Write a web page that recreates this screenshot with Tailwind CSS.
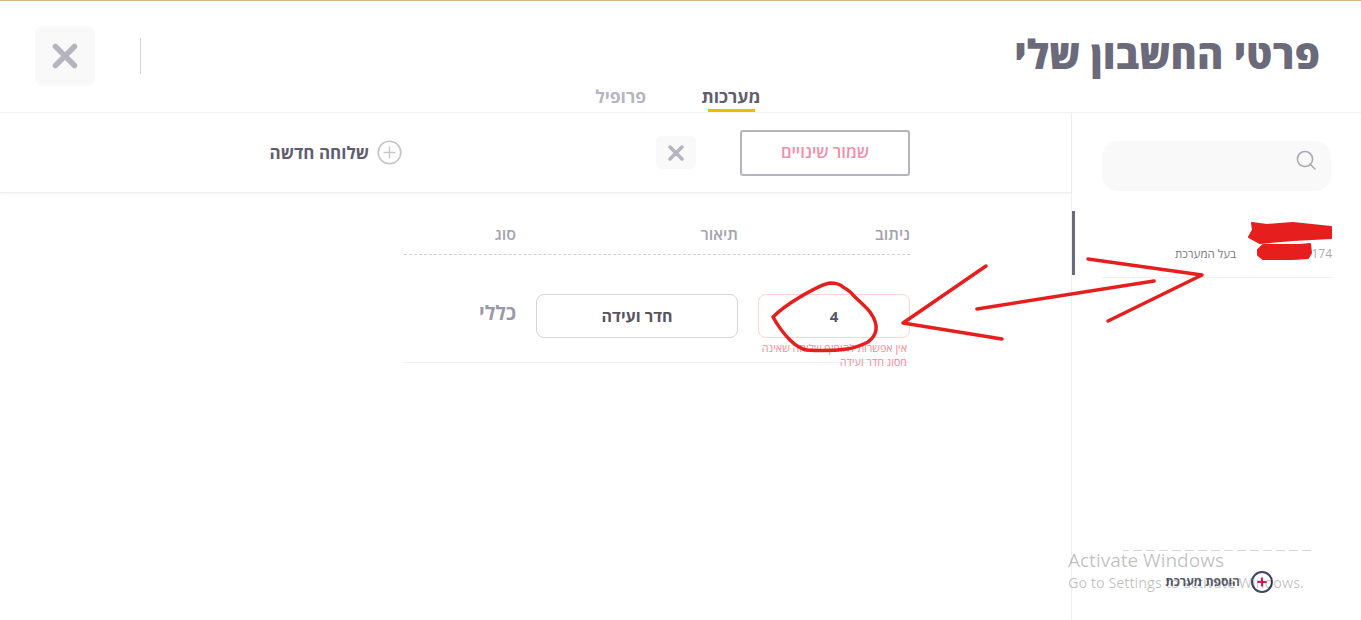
<!DOCTYPE html>
<html lang="he" dir="rtl">
<head>
<meta charset="utf-8">
<script src="https://cdn.jsdelivr.net/npm/@tailwindcss/browser@4"></script>
</head>
<body class="bg-white">
<div class="relative w-[1361px] h-[620px] overflow-hidden bg-white font-['Open_Sans','Liberation_Sans',sans-serif] border-t border-[#d2b48c]">
  <header class="h-[112px] border-b border-[#f3f3f5] flex flex-col">
    <div class="h-[85px] flex justify-between pr-[41px] pl-[35px]">
      <h1 class="mt-[28px] text-[40px] leading-[50px] font-extrabold text-[#6b6a7b] whitespace-nowrap">פרטי החשבון שלי</h1>
      <div class="flex items-start">
        <div class="mt-[37px] w-px h-[36px] bg-[#d5d5da] ml-[45px]"></div>
        <button class="mt-[25px] w-[60px] h-[60px] rounded-lg bg-[#f9f9fa] flex items-center justify-center">
          <svg width="26" height="26" viewBox="0 0 26 26"><path d="M3.5 3.5L22.5 22.5M22.5 3.5L3.5 22.5" stroke="#b5b4bf" stroke-width="5.5" stroke-linecap="round"/></svg>
        </button>
      </div>
    </div>
    <nav class="flex-1 flex pr-[601px] gap-[56px]">
      <div class="relative w-[58px] text-center text-[17.5px] leading-[20px] font-bold text-[#5f5e6e] whitespace-nowrap flex justify-center">מערכות<span class="absolute bottom-0 right-[5px] w-[47px] h-[3px] bg-[#f5b800]"></span></div>
      <div class="text-[17.5px] leading-[20px] font-bold text-[#b5b4bf] whitespace-nowrap">פרופיל</div>
    </nav>
  </header>

  <div class="flex h-[507px]">
    <aside class="w-[290px] shrink-0 border-l border-[#f0f0f2] flex flex-col">
      <div class="mt-[28px] mr-[30px] w-[229px] h-[50px] rounded-2xl bg-[#f9f9fa] flex items-start pt-[9px] pr-[15px]">
        <svg width="20" height="20" viewBox="0 0 20 20" fill="none"><circle cx="9" cy="9" r="7.6" stroke="#a9a8b4" stroke-width="1.5"/><path d="M14 14L19 19" stroke="#a9a8b4" stroke-width="1.5" stroke-linecap="round"/></svg>
      </div>
      <div class="relative mt-[20px] h-[67px] pr-[29px] pl-[30px]">
        <div class="absolute left-0 top-0 w-[3px] h-[64px] bg-[#6b6a7b]"></div>
        <div class="h-full border-b border-[#f0f0f2] flex justify-between items-start pt-[33px] text-[12px] leading-[20px]">
          <span class="text-[#a9a8b4]" dir="ltr">174</span>
          <span class="text-[11.5px] text-[#77767f] ml-[73px]">בעל המערכת</span>
        </div>
      </div>
      <div class="mt-auto mb-[27px] mr-[50px] w-[188px] flex flex-col">
        <div class="h-px bg-[repeating-linear-gradient(to_left,#d5d5da_0,#d5d5da_9px,transparent_9px,transparent_13px)]"></div>
        <div class="pt-[20px] pr-[38px] flex items-center gap-[11px]">
          <svg width="22" height="22" viewBox="0 0 22 22" fill="none" class="shrink-0"><circle cx="11" cy="11" r="10" stroke="#44446a" stroke-width="2"/><path d="M11 6.5V15.5M6.5 11H15.5" stroke="#e6195f" stroke-width="2"/></svg>
          <span class="text-[12px] font-bold text-[#5f5e6e] whitespace-nowrap">הוספת מערכת</span>
        </div>
      </div>
    </aside>

    <main class="flex-1 flex flex-col">
      <div class="h-[80px] border-b border-[#f0f0f2] shadow-[0_1px_3px_rgba(0,0,0,0.05)] flex items-center pr-[161px]">
        <button class="w-[170px] h-[46px] rounded-[3px] border-2 border-[#b5b4bf] text-[16.5px] font-semibold text-[#f48ca8] whitespace-nowrap">שמור שינויים</button>
        <button class="mr-[44px] w-[40px] h-[33px] rounded-md bg-[#f9f9fa] flex items-center justify-center">
          <svg width="16" height="16" viewBox="0 0 16 16"><path d="M2 2L14 14M14 2L2 14" stroke="#b5b4bf" stroke-width="3.5" stroke-linecap="round"/></svg>
        </button>
        <div class="mr-[254px] flex items-center gap-[8px]">
          <svg width="25" height="25" viewBox="0 0 25 25" fill="none"><circle cx="12.5" cy="12.5" r="11.3" stroke="#c4c4c8" stroke-width="1.6"/><path d="M12.5 6.5V18.5M6.5 12.5H18.5" stroke="#c9c9cd" stroke-width="1.5"/></svg>
          <span class="text-[17px] font-bold text-[#5f5e6e] whitespace-nowrap">שלוחה חדשה</span>
        </div>
      </div>

      <div class="mr-[161px] w-[506px] mt-[29px]">
        <div class="grid grid-cols-[152px_202px_112px] gap-x-[20px] h-[33px] border-b border-dashed border-[#d0d0d5] text-[16px] leading-[24px] font-semibold text-[#a4a3af]">
          <div>ניתוב</div>
          <div>תיאור</div>
          <div>סוג</div>
        </div>
        <div class="grid grid-cols-[152px_202px_112px] gap-x-[20px] h-[108px] pt-[39px] border-b border-[#f0f0f2]">
          <div>
            <div class="h-[44px] rounded-lg border border-[#fdd5d5] flex items-center justify-center text-[15px] font-bold text-[#55545f]">4</div>
            <p class="mt-[3px] pr-[3px] text-[10.75px] leading-[14px] text-[#f48c96]">אין אפשרות להוסיף שלוחה שאינה מסוג חדר ועידה</p>
          </div>
          <div class="h-[44px] rounded-lg border border-[#d5d5da] flex items-center justify-center text-[16px] font-bold text-[#55545f]">חדר ועידה</div>
          <div class="text-[19.5px] leading-[38px] font-bold text-[#9a99a6]">כללי</div>
        </div>
      </div>
    </main>
  </div>

  <div class="absolute left-[1068px] top-[547px] text-[#000]/25 font-['Open_Sans',sans-serif] pointer-events-none" dir="ltr">
    <div class="text-[19px] leading-[24px] whitespace-nowrap">Activate Windows</div>
    <div class="text-[14.4px] leading-[22px] whitespace-nowrap">Go to Settings to activate Windows.</div>
  </div>

  <svg class="absolute left-0 top-[-1px] pointer-events-none" width="1361" height="620" viewBox="0 0 1361 620" fill="none" stroke="#e61e1e" stroke-linecap="round" stroke-linejoin="round">
    <path stroke-width="3.5" d="M773 317C782 308 790 303 800 297C812 290 822 284 830 283C838 283 841 285 843 287C848 290 851 292 853 295C860 302 866 307 870 312C875 319 877 324 876 330C875 336 872 339 868 342C860 346 855 348 847 349C832 351 820 351 807 350C800 349 795 345 790 340C784 334 778 326 773 317Z"/>
    <path stroke-width="3.5" d="M986 266L903 323L1002 339"/>
    <path stroke-width="3.5" d="M977 309L1154 281"/>
    <path stroke-width="3.5" d="M1088 259L1202 275L1108 321"/>
    <path fill="#e61e1e" stroke-width="2" d="M1252 223L1267 225L1293 223L1331 227L1331 238L1293 240L1260 243L1249 237L1253 230Z"/>
    <path fill="#e61e1e" stroke-width="2" d="M1258 250L1263 245L1300 245L1310 244L1311 253L1308 258L1293 259L1263 259L1258 255Z"/>
  </svg>
</div>
</body>
</html>
